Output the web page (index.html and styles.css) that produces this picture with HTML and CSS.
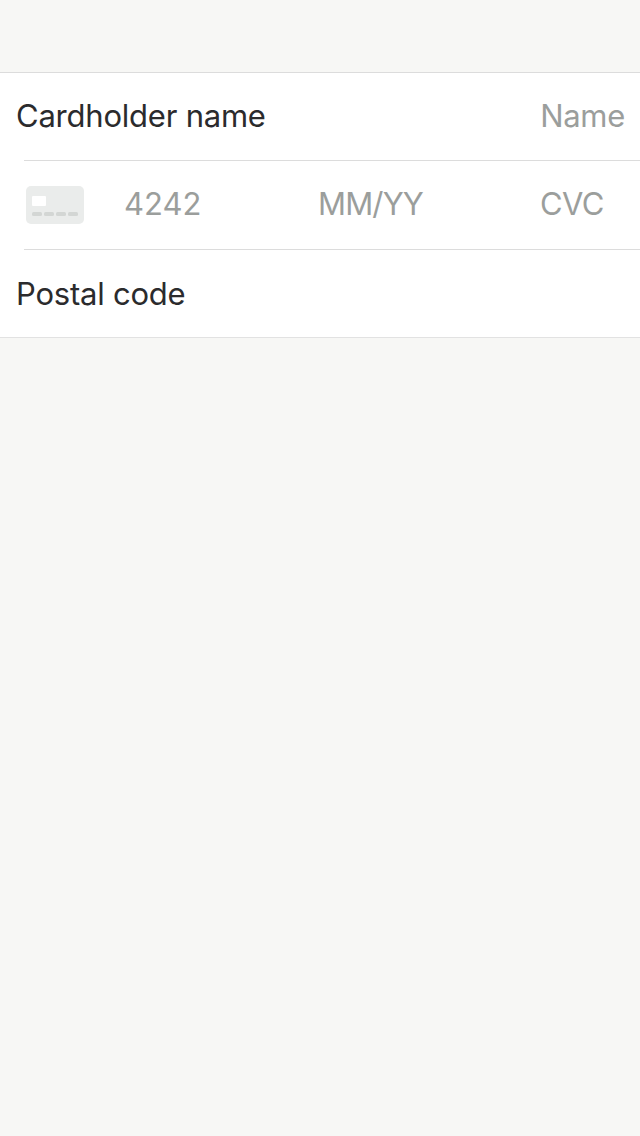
FILE: index.html
```html
<!DOCTYPE html>
<html lang="en">
<head>
<meta charset="utf-8">
<title>Card details</title>
<link rel="stylesheet" href="styles.css">
</head>
<body>
<main class="form">
  <div class="row">
    <span class="label">Cardholder name</span>
    <span class="placeholder name">Name</span>
  </div>
  <div class="row divided">
    <svg class="card" width="58" height="38" viewBox="0 0 58 38">
      <rect width="58" height="38" rx="5" fill="#eaeceb"/>
      <rect x="6" y="10" width="14" height="10" rx="1" fill="#fff"/>
      <g fill="#d3d6d4">
        <rect x="6" y="26" width="10" height="4" rx="1.5"/>
        <rect x="18" y="26" width="10" height="4" rx="1.5"/>
        <rect x="30" y="26" width="10" height="4" rx="1.5"/>
        <rect x="42" y="26" width="10" height="4" rx="1.5"/>
      </g>
    </svg>
    <span class="placeholder number">4242</span>
    <span class="placeholder expiry">MM/YY</span>
    <span class="placeholder cvc">CVC</span>
  </div>
  <div class="row divided">
    <span class="label postal">Postal code</span>
  </div>
</main>
</body>
</html>
```
FILE: styles.css
```css
body {
  margin: 0;
  padding-top: 72px;
  background: #f7f7f5;
  font-family: Inter, "Liberation Sans", sans-serif;
  font-size: 31px;
  font-weight: 400;
  line-height: 40px;
}

.form {
  box-sizing: border-box;
  height: 266px;
  background: #fff;
  border-top: 1px solid #dcdcdc;
  border-bottom: 1px solid #e2e2e2;
}

.row {
  display: flex;
  align-items: center;
  box-sizing: border-box;
  height: 87px;
  padding: 0 16px;
  white-space: nowrap;
}

.divided {
  height: 89px;
  margin-left: 24px;
  padding-left: 0;
  border-top: 1px solid #dcdcdc;
}

.label,
.placeholder {
  padding-bottom: 2px;
}

.label {
  color: #2b2b2d;
  letter-spacing: -0.22px;
}

.placeholder { color: #9b9e9c; }

.name {
  margin-left: auto;
  margin-right: -1px;
  letter-spacing: -0.3px;
}

.card {
  flex: none;
  margin-left: 2px;
}

.number {
  width: 194px;
  margin-left: 40px;
}

.expiry {
  width: 222px;
  letter-spacing: -0.85px;
}

.cvc { letter-spacing: -0.6px; }

.postal {
  margin-left: -8px;
  padding-bottom: 0;
}
```
